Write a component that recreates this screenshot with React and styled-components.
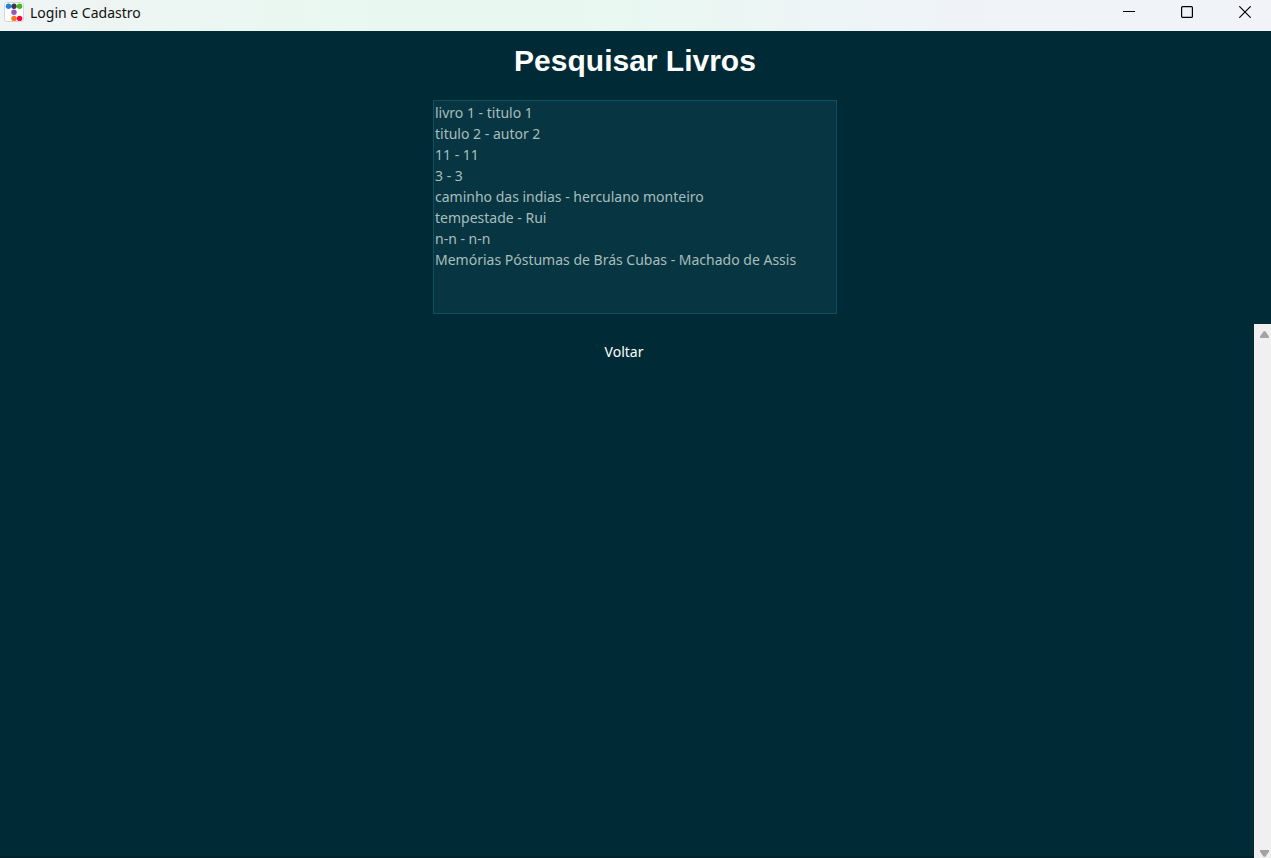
import React from "react";
import styled, { createGlobalStyle } from "styled-components";

const GlobalStyle = createGlobalStyle`
  * { box-sizing: border-box; }
  body { margin: 0; background: #002b36; }
`;

const Window = styled.div`
  display: flex;
  flex-direction: column;
  min-height: 100vh;
  background: #002b36;
  font-family: "Segoe UI", "Noto Sans", "Open Sans", sans-serif;
  font-size: 14px;
  line-height: 21px;
`;

const TitleBar = styled.header`
  display: flex;
  align-items: flex-start;
  justify-content: space-between;
  height: 31px;
  background: linear-gradient(90deg, #eff4f4 0%, #e8f8f0 30%, #e8f8f0 45%, #eff3f8 75%, #f1f3f8 100%);
`;

const Caption = styled.div`
  display: flex;
  align-items: flex-start;
  gap: 6px;
  padding: 2px 4px;
  color: #111;
`;

const AppIcon = styled.svg`
  display: block;
  width: 20px;
  height: 20px;
`;

const Controls = styled.div`
  display: flex;
  gap: 6px;
`;

const ControlButton = styled.button`
  display: flex;
  align-items: center;
  justify-content: center;
  width: 52px;
  height: 24px;
  padding: 0;
  border: 0;
  background: transparent;
  color: #000;
`;

const Content = styled.main`
  display: flex;
  flex: 1;
  flex-direction: column;
`;

const Search = styled.section`
  display: flex;
  flex-direction: column;
  align-items: center;
  padding: 11px 1px 10px 0;
`;

const Title = styled.h1`
  margin: 0 0 20px;
  color: #fff;
  font: bold 30px/38px "Liberation Sans", Arial, sans-serif;
`;

const BookList = styled.ul`
  width: 404px;
  max-width: 100%;
  height: 214px;
  margin: 0;
  padding: 1px;
  overflow: hidden;
  list-style: none;
  border: 1px solid #0b5162;
  background: #073642;
  color: #a9bdbd;
`;

const Book = styled.li`
  white-space: nowrap;
`;

const Lower = styled.section`
  display: flex;
  flex: 1;
  align-items: stretch;
`;

const Actions = styled.div`
  display: flex;
  flex: 1;
  align-items: flex-start;
  justify-content: center;
  padding: 12px 6px 0 0;
  border-bottom: 2px solid #00222d;
`;

const BackButton = styled.button`
  padding: 5px 10px;
  border: 0;
  background: #002b36;
  color: #fff;
  font: inherit;
`;

const ScrollTrack = styled.div`
  display: flex;
  flex-direction: column;
  justify-content: space-between;
  align-items: flex-end;
  width: 17px;
  padding: 6px 1px 0 0;
  background: #f0f0f0;
`;

const ScrollButton = styled.button`
  display: block;
  padding: 0;
  border: 0;
  background: transparent;
  line-height: 0;
`;

const books = [
  "livro 1 - titulo 1",
  "titulo 2 - autor 2",
  "11 - 11",
  "3 - 3",
  "caminho das indias - herculano monteiro",
  "tempestade - Rui",
  "n-n - n-n",
  "Memórias Póstumas de Brás Cubas - Machado de Assis",
];

const dots = [
  [4.5, 4.2, "#1f7fe8"],
  [10, 4.2, "#3b3b44"],
  [15.6, 4.2, "#3fb91c"],
  [10, 10.2, "#9a55bd"],
  [10, 16.4, "#ff7420"],
  [15.6, 16.4, "#fb0540"],
];

export default function App() {
  return (
    <Window>
      <GlobalStyle />
      <TitleBar>
        <Caption>
          <AppIcon viewBox="0 0 20 20" aria-hidden="true">
            <rect x="0.5" y="0.5" width="19" height="19" rx="2" fill="#fff" stroke="#d3d6d6" />
            {dots.map(([x, y, color]) => (
              <circle key={color} cx={x} cy={y} r="2.7" fill={color} />
            ))}
          </AppIcon>
          <span>Login e Cadastro</span>
        </Caption>
        <Controls>
          <ControlButton type="button" aria-label="Minimizar">
            <svg width="12" height="12" viewBox="0 0 12 12">
              <path d="M0 5.5h12" stroke="currentColor" />
            </svg>
          </ControlButton>
          <ControlButton type="button" aria-label="Maximizar">
            <svg width="12" height="12" viewBox="0 0 12 12">
              <rect x="0.6" y="0.6" width="10.8" height="10.8" rx="1" fill="none" stroke="currentColor" strokeWidth="1.2" />
            </svg>
          </ControlButton>
          <ControlButton type="button" aria-label="Fechar">
            <svg width="12" height="12" viewBox="0 0 12 12">
              <path d="M0.3 0.3l11.4 11.4M11.7 0.3L0.3 11.7" stroke="currentColor" strokeWidth="1.2" />
            </svg>
          </ControlButton>
        </Controls>
      </TitleBar>
      <Content>
        <Search>
          <Title>Pesquisar Livros</Title>
          <BookList>
            {books.map((book) => (
              <Book key={book}>{book}</Book>
            ))}
          </BookList>
        </Search>
        <Lower>
          <Actions>
            <BackButton type="button">Voltar</BackButton>
          </Actions>
          <ScrollTrack>
            <ScrollButton type="button" aria-label="Rolar para cima">
              <svg width="11" height="9" viewBox="0 0 11 9">
                <path d="M4.6 1.3h1.8L10 6.5V8H1V6.5z" fill="#a3a3a3" />
              </svg>
            </ScrollButton>
            <ScrollButton type="button" aria-label="Rolar para baixo">
              <svg width="11" height="9" viewBox="0 0 11 9">
                <path d="M1 1h9v1.5L6.4 7.7H4.6L1 2.5z" fill="#a3a3a3" />
              </svg>
            </ScrollButton>
          </ScrollTrack>
        </Lower>
      </Content>
    </Window>
  );
}
